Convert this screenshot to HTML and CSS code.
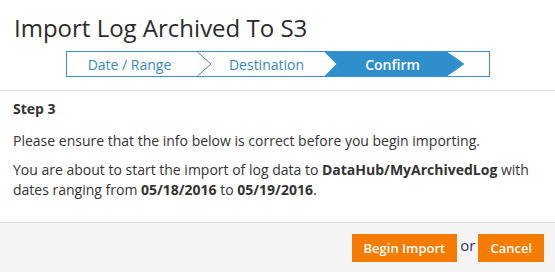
FILE: index.html
```html
<!DOCTYPE html>
<html lang="en">
<head>
    <meta charset="UTF-8">
    <meta name="viewport" content="width=device-width, initial-scale=1.0">
    <title>Import Log Archived To S3</title>
    <link rel="stylesheet" href="styles.css">
</head>

<body>
    <div class="modal">
        <header class="modal-header">
            <h1>Import Log Archived To S3</h1>
            <ol class="steps">
                <li class="step step-first">
                    Date / Range
                    <svg class="chevron" width="15" height="24" viewBox="0 0 15 24">
                        <polyline points="0.5,0 14,12 0.5,24" fill="none" stroke="#3a8fcb" stroke-width="1"/>
                    </svg>
                </li>
                <li class="step">Destination</li>
                <li class="step step-active">Confirm</li>
            </ol>
        </header>

        <section class="modal-body">
            <h2>Step 3</h2>
            <p>Please ensure that the info below is correct before you begin importing.</p>
            <p>You are about to start the import of log data to <b>DataHub/MyArchivedLog</b> with dates ranging from <b>05/18/2016</b> to <b>05/19/2016</b>.</p>
        </section>

        <footer class="modal-footer">
            <button type="button" class="btn">Begin Import</button>
            <span class="or">or</span>
            <button type="button" class="btn">Cancel</button>
        </footer>
    </div>
</body>

</html>
```

FILE: styles.css
```css
body {
    margin: 0;
    font-family: "Open Sans", "Liberation Sans", sans-serif;
    color: #333333;
    background: #ffffff;
}

.modal {
    width: 555px;
    height: 272px;
    display: flex;
    flex-direction: column;
}

.modal-header {
    padding: 11px 0 13px;
    border-bottom: 1px solid #e6e6e6;
}

h1 {
    margin: 0 0 7px 14px;
    font-size: 24px;
    font-weight: 400;
    line-height: 33px;
    color: #2b2b2b;
}

.steps {
    display: flex;
    width: 422px;
    height: 24px;
    margin: 0 auto;
    padding: 0;
    list-style: none;
    border: 1px solid #3a8fcb;
}

.step {
    position: relative;
    display: flex;
    align-items: center;
    justify-content: center;
    width: 112px;
    margin-left: 14px;
    font-size: 14px;
    color: #3a88c2;
}

.step-first {
    width: 126px;
    margin-left: 0;
    padding-right: 4px;
}

.chevron {
    position: absolute;
    left: 100%;
    top: 0;
}

.step-active {
    z-index: 0;
    color: #ffffff;
    font-weight: 600;
}

.step-active::before {
    content: "";
    position: absolute;
    z-index: -1;
    top: 0;
    bottom: 0;
    left: -12px;
    right: -16px;
    background: #2f8fcd;
    clip-path: polygon(0 0, calc(100% - 17px) 0, 100% 50%, calc(100% - 17px) 100%, 0 100%, 12px 50%);
}

.modal-body {
    flex: 1;
    padding: 8px 13px 0;
    font-size: 14px;
    line-height: 20px;
}

h2 {
    margin: 0 0 12px;
    font-size: 14px;
    font-weight: 700;
}

p {
    margin: 0 0 9px;
}

b {
    font-weight: 700;
}

.modal-footer {
    display: flex;
    justify-content: flex-end;
    align-items: center;
    gap: 3px;
    height: 49px;
    padding: 0 11px 0 0;
    background: #f4f4f4;
    border-top: 1px solid #dcdcdc;
}

.btn {
    height: 28px;
    padding: 0 12px;
    border: none;
    border-radius: 0;
    background: #f57c00;
    color: #ffffff;
    font-family: inherit;
    font-size: 13px;
    font-weight: 600;
}

.or {
    font-size: 15px;
    color: #333366;
    line-height: 22px;
    padding-bottom: 6px;
}
```
